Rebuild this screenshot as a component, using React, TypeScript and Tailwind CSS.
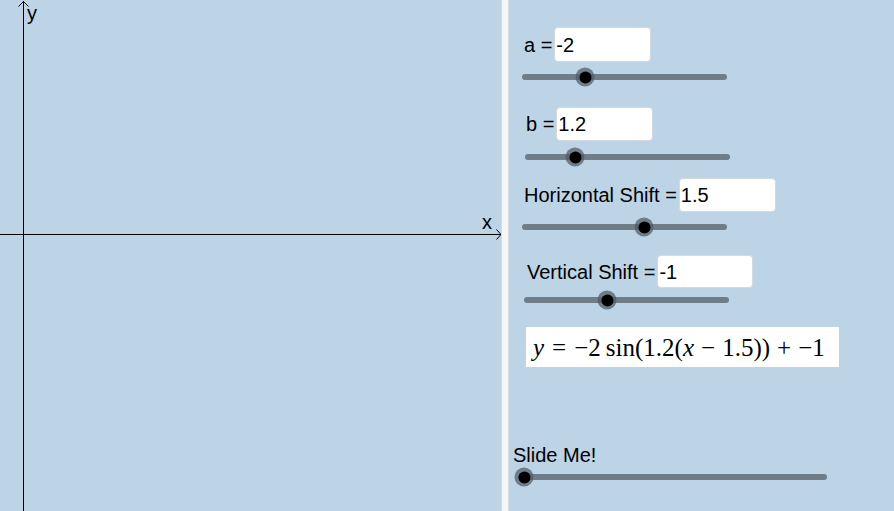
import React from "react";

const sans = '"Liberation Sans", Arial, sans-serif';

type SliderProps = { className: string; thumb: number };

// track + thumb; the thumb sits over the track at the slider's value
function Slider({ className, thumb }: SliderProps) {
  return (
    <div className={`relative h-[6px] shrink-0 rounded-full bg-[#6f7d89] ${className}`}>
      <div
        className="absolute top-1/2 flex h-[19px] w-[19px] -translate-x-1/2 -translate-y-1/2 items-center justify-center rounded-full bg-[#4d5963]/70"
        style={{ left: thumb }}
      >
        <div className="h-[12px] w-[12px] rounded-full bg-black" />
      </div>
    </div>
  );
}

type FieldProps = { className: string; label: string; value: string; boxClass: string };

function Field({ className, label, value, boxClass }: FieldProps) {
  return (
    <div className={`flex items-center ${className}`}>
      <span className="mr-[2px] whitespace-pre text-[20px] leading-none text-black">{label}</span>
      <div className={`flex items-center rounded-[4px] border border-[#d4d9de] bg-white pl-[1px] text-[20px] leading-none text-black ${boxClass}`}>
        {value}
      </div>
    </div>
  );
}

export default function App() {
  return (
    <div className="flex h-[511px] w-[894px] overflow-hidden bg-[#bdd3e6] font-['Liberation_Sans',Arial,sans-serif]">
      {/* graphics view */}
      <div className="h-full w-[501px] shrink-0">
        <svg width="501" height="511" className="block">
          <line x1="23.5" y1="1" x2="23.5" y2="511" stroke="#000" strokeWidth="1" />
          <polyline points="18.5,6.5 23.5,1.5 28.5,6.5" fill="none" stroke="#000" strokeWidth="1" />
          <line x1="0" y1="234.5" x2="501" y2="234.5" stroke="#000" strokeWidth="1" />
          <polyline points="496.5,229.5 501,234.5 496.5,239.5" fill="none" stroke="#000" strokeWidth="1" />
          <text x="27" y="20" fontSize="20" fontFamily={sans} fill="#000">y</text>
          <text x="482" y="229" fontSize="20" fontFamily={sans} fill="#000">x</text>
        </svg>
      </div>

      {/* divider */}
      <div className="h-full w-[8px] shrink-0 border-x border-[#d6dce2] bg-[#f5f5f5]" />

      {/* controls */}
      <div className="flex h-full flex-1 flex-col items-start">
        <Field className="ml-[15px] mt-[27px]" label="a =" value="-2" boxClass="h-[35px] w-[97px]" />
        <Slider className="ml-[13px] mt-[12px] w-[205px]" thumb={63} />

        <Field className="ml-[17px] mt-[27px]" label="b =" value="1.2" boxClass="h-[34px] w-[97px]" />
        <Slider className="ml-[16px] mt-[13px] w-[205px]" thumb={50} />

        <Field className="ml-[15px] mt-[18px]" label="Horizontal Shift =" value="1.5" boxClass="h-[34px] w-[97px]" />
        <Slider className="ml-[13px] mt-[12px] w-[205px]" thumb={122} />

        <Field className="ml-[18px] mt-[25px]" label="Vertical Shift =" value="-1" boxClass="h-[33px] w-[96px]" />
        <Slider className="ml-[15px] mt-[9px] w-[205px]" thumb={83} />

        <div className="ml-[17px] mt-[24px] flex h-[40px] w-[313px] items-center whitespace-nowrap bg-white pl-[7px] font-['Liberation_Serif','Times_New_Roman',serif] text-[25px] leading-none text-black">
          <i>y</i>
          <span className="mx-[8px]">=</span>
          <span>−2</span>
          <span className="ml-[5px]">sin(1.2(</span>
          <i>x</i>
          <span className="mx-[7px]">−</span>
          <span>1.5))</span>
          <span className="mx-[7px]">+</span>
          <span>−1</span>
        </div>

        <div className="ml-[4px] mt-[78px] text-[20px] leading-none text-black">Slide Me!</div>
        <Slider className="ml-[9px] mt-[9px] w-[309px]" thumb={6} />
      </div>
    </div>
  );
}
